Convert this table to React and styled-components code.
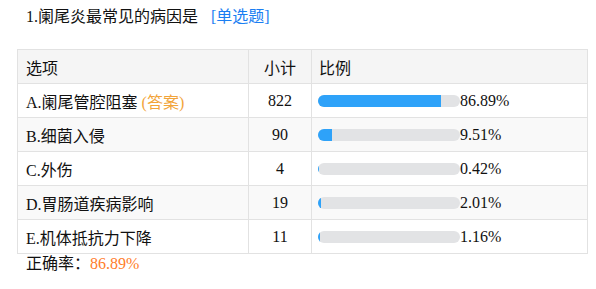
import React from "react";
import styled, { createGlobalStyle } from "styled-components";

const Global = createGlobalStyle`
  html, body { margin: 0; padding: 0; background: #fff; }
  body {
    font-family: "Liberation Serif", "Noto Sans CJK SC", serif;
    font-size: 16px;
    color: #111;
  }
`;

const Page = styled.div`
  padding: 7px 9px 0 17px;
`;

const Title = styled.div`
  margin-left: 9px;
  line-height: 20px;
  height: 20px;
  margin-bottom: 22px;
`;

const TypeTag = styled.span`
  margin-left: 13px;
  color: #1a7ef2;
`;

const Table = styled.table`
  width: 570px;
  border-collapse: collapse;
  table-layout: fixed;
`;

const Row = styled.tr`
  height: 34px;
  background: ${(p) => (p.$head ? "#f5f5f5" : p.$alt ? "#f9f9f9" : "#fff")};
`;

const Cell = styled.td`
  border: 1px solid #e2e2e2;
  padding: 0 ${(p) => p.$pad || 8}px;
  text-align: ${(p) => p.$align || "left"};
  vertical-align: middle;
  white-space: nowrap;
`;

const Answer = styled.span`
  color: #f2a43a;
  margin-left: 4px;
`;

const BarWrap = styled.div`
  display: flex;
  align-items: center;
`;

const Track = styled.div`
  width: 142px;
  height: 12px;
  border-radius: 6px;
  background: #e2e3e5;
  overflow: hidden;
`;

const Fill = styled.div`
  height: 100%;
  background: #2ea2f9;
`;

const Rate = styled.div`
  margin-left: 9px;
  line-height: 20px;
`;

const RateValue = styled.span`
  color: #ff7d2a;
`;

const rows = [
  { opt: "A.阑尾管腔阻塞", ans: true, n: 822, p: 86.89 },
  { opt: "B.细菌入侵", n: 90, p: 9.51 },
  { opt: "C.外伤", n: 4, p: 0.42 },
  { opt: "D.胃肠道疾病影响", n: 19, p: 2.01 },
  { opt: "E.机体抵抗力下降", n: 11, p: 1.16 },
];

export default function App() {
  return (
    <>
      <Global />
      <Page>
        <Title>
          1.阑尾炎最常见的病因是<TypeTag>[单选题]</TypeTag>
        </Title>
        <Table>
          <colgroup>
            <col style={{ width: 231 }} />
            <col style={{ width: 63 }} />
            <col style={{ width: 276 }} />
          </colgroup>
          <tbody>
            <Row $head>
              <Cell>选项</Cell>
              <Cell $align="center">小计</Cell>
              <Cell $pad={7}>比例</Cell>
            </Row>
            {rows.map((r, i) => (
              <Row key={r.opt} $alt={i % 2 === 1}>
                <Cell>
                  {r.opt}
                  {r.ans && <Answer>(答案)</Answer>}
                </Cell>
                <Cell $align="center">{r.n}</Cell>
                <Cell $pad={6}>
                  <BarWrap>
                    <Track>
                      <Fill style={{ width: `${r.p}%` }} />
                    </Track>
                    {r.p.toFixed(2)}%
                  </BarWrap>
                </Cell>
              </Row>
            ))}
          </tbody>
        </Table>
        <Rate>
          正确率：<RateValue>86.89%</RateValue>
        </Rate>
      </Page>
    </>
  );
}
